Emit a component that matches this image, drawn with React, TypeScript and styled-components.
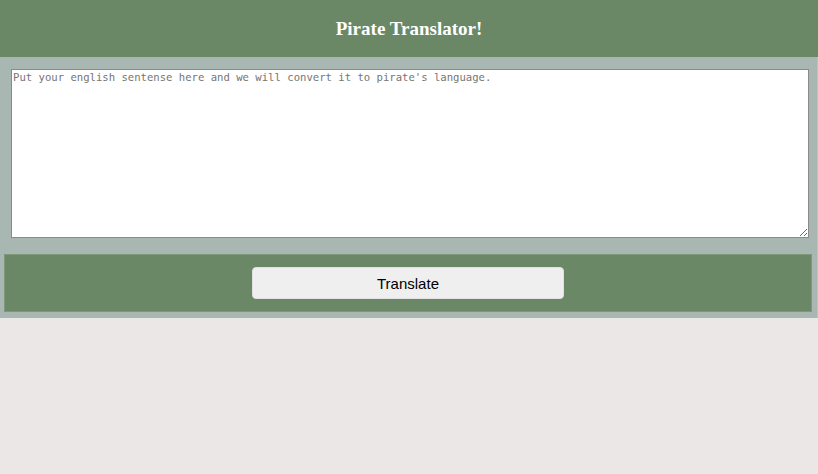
import styled, { createGlobalStyle } from "styled-components";

const GlobalStyle = createGlobalStyle`
    body {
        margin: 0;
        background-color: #ebe7e6;
        font-family: "Liberation Serif", serif;
    }
`

const Header = styled.header`
        background-color: #6a8866;
        height: 57px;
        display: flex;
        align-items: center;
        justify-content: center;
`

const Title = styled.h1`
        margin: 0;
        color: white;
        font-size: 19px;
        font-weight: bold;
        font-family: "Liberation Serif", "Times New Roman", serif;
`

const Main = styled.main`
        background-color: #a9b7b2;
        padding: 12px 6px 6px 4px;
        border-right: 1px solid #b9c4c0;
`

const InputArea = styled.textarea`
        display: block;
        box-sizing: border-box;
        width: 798px;
        height: 169px;
        margin: 0 0 16px 7px;
        padding: 1px;
        border: 1px solid #8a8a8a;
        background: white;
        font-family: "DejaVu Sans Mono", monospace;
        font-size: 10.6px;
        resize: vertical;

        &::placeholder {
            color: #757575;
        }
`

const ButtonPanel = styled.div`
        box-sizing: border-box;
        width: 808px;
        background-color: #6a8866;
        border: 1px solid #7e987b;
        padding: 12px 0;
        display: flex;
        justify-content: center;
`

const TranslateButton = styled.button`
        width: 312px;
        height: 32px;
        background-color: #efefef;
        border: 1px solid #e2e2e2;
        border-radius: 4px;
        font-family: "Liberation Sans", Arial, sans-serif;
        font-size: 15px;
        color: black;
`

export default function App() {
    return (
        <>
            <GlobalStyle />
            <Header>
                <Title>Pirate Translator!</Title>
            </Header>
            <Main>
                <InputArea placeholder="Put your english sentense here and we will convert it to pirate's language." />
                <ButtonPanel>
                    <TranslateButton type="button">Translate</TranslateButton>
                </ButtonPanel>
            </Main>
        </>
    )
}
